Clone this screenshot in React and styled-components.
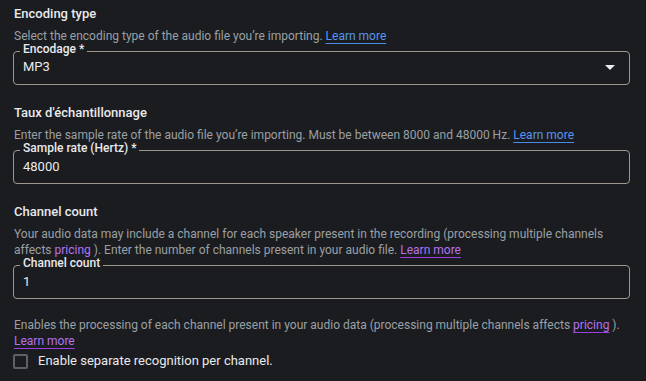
import React from "react";
import styled, { createGlobalStyle } from "styled-components";

const BG = "#1b1c1f";

const Global = createGlobalStyle`
  html, body { margin: 0; padding: 0; background: ${BG}; }
  body { font-family: Roboto, "Noto Sans", "Liberation Sans", sans-serif; -webkit-font-smoothing: antialiased; }
  * { box-sizing: border-box; }
`;

const Page = styled.div`
  width: 646px;
  height: 381px;
  overflow: hidden;
  padding: 4px 16px 0 13px;
  display: flex;
  flex-direction: column;
`;

const Section = styled.section`
  display: flex;
  flex-direction: column;
  margin-top: ${(p) => (p.$first ? 0 : 18)}px;
`;

const Heading = styled.h3`
  margin: 0 0 0 1px;
  font-size: 13px;
  line-height: 20px;
  font-weight: 500;
  color: #e8eaed;
`;

const Desc = styled.p`
  margin: ${(p) => p.$mt ?? 4}px 0 0 1px;
  font-size: 12px;
  line-height: 16px;
  color: #9aa0a6;
`;

const Link = styled.a`
  color: ${(p) => (p.$visited ? "#b472f0" : "#5596ee")};
  text-decoration: ${(p) => (p.$plain ? "none" : "underline")};
  text-decoration-color: ${(p) => (p.$visited ? "#9b3ee6" : "#4a8ae8")};
  text-underline-offset: 3px;
  text-decoration-thickness: 1px;
  cursor: pointer;
`;

const Field = styled.div`
  position: relative;
  margin-top: 7px;
  height: 34px;
  border: 1px solid #9d998b;
  border-radius: 4px;
  padding: ${(p) => (p.$select ? 7 : 8)}px 9px 0 9px;
  display: flex;
  align-items: flex-start;
  justify-content: space-between;
`;

const Label = styled.span`
  position: absolute;
  top: -8px;
  left: 6px;
  padding: 0 3px;
  background: ${BG};
  font-size: 12px;
  line-height: 10px;
  font-weight: 500;
  color: #e8eaed;
  white-space: nowrap;
`;

const Value = styled.span`
  font-size: 13px;
  line-height: 16px;
  color: #e8eaed;
`;

const Arrow = styled.svg`
  margin: 6px 5px 0 0;
  flex: none;
`;

const CheckRow = styled.label`
  display: flex;
  align-items: center;
  gap: 10px;
  margin-top: 2px;
  height: 20px;
`;

const Box = styled.span`
  width: 15px;
  height: 15px;
  border: 2px solid #5f6063;
  border-radius: 2px;
  flex: none;
`;

const CheckText = styled.span`
  font-size: 13px;
  line-height: 20px;
  color: #e8eaed;
`;

export default function App() {
  return (
    <>
      <Global />
      <Page>
        <Section $first>
          <Heading>Encoding type</Heading>
          <Desc>
            Select the encoding type of the audio file you’re importing. <Link>Learn more</Link>
          </Desc>
          <Field $select>
            <Label>Encodage *</Label>
            <Value>MP3</Value>
            <Arrow width="10" height="5" viewBox="0 0 10 5">
              <polygon points="0,0 10,0 5,5" fill="#e8eaed" />
            </Arrow>
          </Field>
        </Section>

        <Section>
          <Heading>Taux d'échantillonnage</Heading>
          <Desc>
            Enter the sample rate of the audio file you’re importing. Must be between 8000 and 48000 Hz.{" "}
            <Link>Learn more</Link>
          </Desc>
          <Field>
            <Label>Sample rate (Hertz) *</Label>
            <Value>48000</Value>
          </Field>
        </Section>

        <Section>
          <Heading>Channel count</Heading>
          <Desc>
            <span>Your audio data may include a channel for each speaker present in the recording (processing multiple channels</span>
            <br />
            <span>affects </span>
            <Link $visited $plain>pricing</Link>
            <span> ). Enter the number of channels present in your audio file. </span>
            <Link $visited>Learn more</Link>
          </Desc>
          <Field>
            <Label>Channel count</Label>
            <Value>1</Value>
          </Field>
        </Section>

        <Desc $mt={18}>
          <span>Enables the processing of each channel present in your audio data (processing multiple channels affects </span>
          <Link $visited>pricing</Link>
          <span> ).</span>
          <br />
          <Link $visited>Learn more</Link>
        </Desc>
        <CheckRow>
          <Box />
          <CheckText>Enable separate recognition per channel.</CheckText>
        </CheckRow>
      </Page>
    </>
  );
}
